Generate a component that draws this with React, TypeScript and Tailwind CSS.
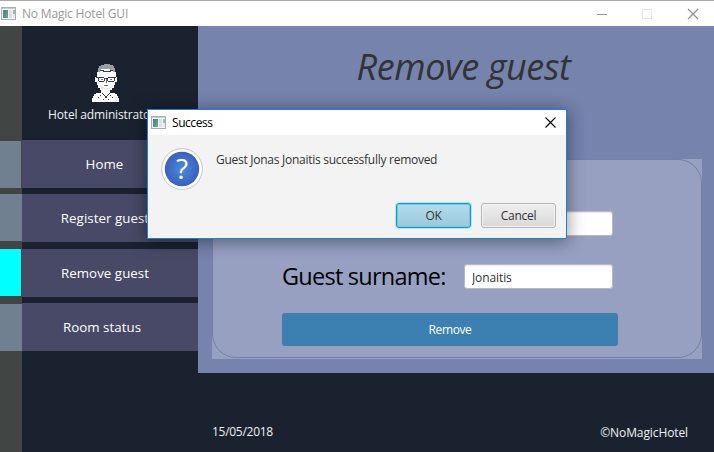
import React from "react";

const sans = "font-['Open_Sans','Noto_Sans',sans-serif]";

function AppIcon() {
  return (
    <svg width="16" height="14" viewBox="0 0 16 14" className="shrink-0" shapeRendering="crispEdges">
      <defs>
        <linearGradient id="pane" x1="0" y1="0" x2="1" y2="1">
          <stop offset="0" stopColor="#5576a0" />
          <stop offset="1" stopColor="#55b878" />
        </linearGradient>
      </defs>
      <rect x="0.5" y="0.5" width="14" height="12" fill="#f4f5f6" stroke="#a9b0b5" />
      <rect x="1" y="1" width="13" height="1" fill="#c9ced2" />
      <rect x="2" y="3" width="5" height="8" fill="url(#pane)" />
      <rect x="8" y="3" width="3" height="8" fill="#dfe2e4" />
      <rect x="12" y="3" width="2" height="4" fill="#8fc0b0" />
      <rect x="12" y="7" width="2" height="4" fill="#e6e8e9" />
    </svg>
  );
}

function Avatar() {
  return (
    <svg width="28" height="39" viewBox="0 0 28 39" shapeRendering="crispEdges">
      <path d="M4 14h1v-5h2v-3h15v3h2v5h1v5h-2v3h-1v3h-2v2h-2v3h5v1h2v2h1v2h1v4H0v-4h1v-2h1v-2h2v-1h5v-3H8v-2H6v-3H5v-3H3v-5z" fill="#fff" />
      <path d="M6 9V5h1V3h2V2h3V1h6v1h3v1h1v2h1v4h-2V7h-3V6h-9v1H8v2z" fill="#9b9da0" />
      <path d="M8 7h3v1h7V7h3" fill="none" stroke="#39404b" />
      <path d="M4 14.500h8M16 14.500h8M12 15.500h4M6.500 15v3M12.500 15v3M15.500 15v3M22.500 15v3M7 18.500h5M16 18.500h6" fill="none" stroke="#39404b" />
      <path d="M9 16h2v1H9zM18 16h2v1h-2zM14 16h1v4h-1zM12 22h4v1h-4z" fill="#6e737a" />
      <path d="M9 23h1v1h2v1h5v-1h2v-1h1v2h-2v1h-8v-1H9z" fill="#e5e8e8" />
      <path d="M10 30h1v1h1v1h1v1h2v-1h1v-1h1v-1h1v1h-1v1h-1v1h-1v2h-2v-2h-1v-1h-1v-1h-1zM6 34h1v1H6zM8 32h1v1H8zM11 36h1v1h-1zM16 36h1v1h-1zM20 34h1v1h-1zM18 32h1v1h-1z" fill="#39404b" />
    </svg>
  );
}

const nav = [
  { label: "Home", row: "h-12 items-end", mark: "h-[47px] w-[21px] bg-[#708090]", text: "pr-[11px]" },
  { label: "Register guest", row: "mt-1.5 h-12 items-start", mark: "h-[47px] w-[22px] bg-[#708090]", text: "pr-[10px]" },
  { label: "Remove guest", row: "mt-[7px] h-12 items-start", mark: "h-[47px] w-[21px] bg-[#00ffff]", text: "pr-[10px]" },
  { label: "Room status", row: "mt-1.5 h-12 items-end", mark: "h-[47px] w-[22px] bg-[#708090]", text: "pr-[16px]" },
];

function Sidebar() {
  return (
    <aside className="w-[198px] shrink-0 bg-[linear-gradient(to_right,#414544_22px,#1a2230_22px)]">
      <div className="flex h-[114px] flex-col pt-[37px]">
        <div className="pl-[92px]"><Avatar /></div>
        <p className="mt-[4px] pl-12 text-[12px] leading-[18px] tracking-[-0.15px] whitespace-nowrap text-[#f0f1f3]">Hotel administrator</p>
      </div>
      <nav>
        {nav.map((n) => (
          <div key={n.label} className={`flex ${n.row}`}>
            <div className="w-[22px]"><div className={n.mark} /></div>
            <div className={`flex h-12 flex-1 items-center justify-center bg-[#484966] pt-[2px] text-[13.3px] tracking-[0.05px] text-white ${n.text}`}>{n.label}</div>
          </div>
        ))}
      </nav>
    </aside>
  );
}

function Dialog() {
  return (
    <div className="absolute top-[109px] left-[147px] flex h-[130px] w-[420px] flex-col border border-[#1883d7] bg-[#f3f3f3] shadow-[0_2px_16px_1px_rgba(0,0,0,0.42)]">
      <div className="flex h-[25px] items-center bg-white pr-[10px] pl-[3px]">
        <AppIcon />
        <span className="ml-[5px] flex-1 text-[12px] tracking-[-0.45px] text-black">Success</span>
        <svg width="11" height="11" viewBox="0 0 11 11"><path d="M.5.5l10 10M10.500.5l-10 10" stroke="#000" strokeWidth="1.1" /></svg>
      </div>
      <div className="flex h-[67px] items-start pt-[13px] pl-[13px]">
        <svg width="42" height="42" viewBox="0 0 42 42">
          <defs>
            <radialGradient id="help"><stop offset="0" stopColor="#4a8bdd" /><stop offset="1" stopColor="#3960bd" /></radialGradient>
          </defs>
          <circle cx="21" cy="21" r="20.400" fill="#fff" stroke="#c6c6c6" />
          <circle cx="21" cy="21" r="17.200" fill="url(#help)" />
          <text x="21" y="31" textAnchor="middle" fontSize="28" fill="#fff" fontFamily="Open Sans">?</text>
        </svg>
        <p className="ml-[13px] pt-[3px] text-[12px] leading-[18px] tracking-[-0.27px] text-[#333]">Guest Jonas Jonaitis successfully removed</p>
      </div>
      <div className="flex justify-end gap-[10px] pr-[10px] text-[12px] text-[#333]">
        <button className="mt-[1px] h-[25px] w-[75px] rounded-[3px] border border-[#039ed3] bg-linear-to-b from-[#b3dcec] to-[#9bc8dc] pt-[1px] tracking-[-0.4px] shadow-[0_0_0_1px_#b5e3f1,inset_0_0_0_1px_#7ec6df]">OK</button>
        <button className="mt-[1px] h-[25px] w-[75px] rounded-[3px] border border-[#b5b5b5] bg-linear-to-b from-[#efefef] to-[#d9d9d9] pt-[1px] tracking-[-0.25px] shadow-[inset_0_0_0_1px_#f4f4f4]">Cancel</button>
      </div>
    </div>
  );
}

const input = "h-[25px] w-[149px] rounded-[3px] border border-[#b9bac0] bg-white px-[7px] pt-[1px] text-[12px] tracking-[-0.1px] text-[#333] shadow-[inset_0_1px_1px_#e8e8e8] outline-none";

export default function App() {
  return (
    <div className={`relative flex h-[452px] w-[714px] flex-col overflow-hidden bg-[#1a2230] ${sans}`}>
      <header className="flex h-[26px] shrink-0 items-center border-t border-[#a9a9a9] bg-white pl-[1px]">
        <AppIcon />
        <span className="ml-[5px] flex-1 text-[12px] tracking-[-0.18px] text-[#999]">No Magic Hotel GUI</span>
        <svg width="102" height="12" viewBox="0 0 102 12" className="mr-[15px]">
          <path d="M0 6.500h10" stroke="#999" />
          <rect x="45.500" y="1.500" width="9" height="9" fill="none" stroke="#e8e8e8" />
          <path d="M91 1l10 10M101 1l-10 10" stroke="#909090" strokeWidth="1.200" />
        </svg>
      </header>
      <div className="flex min-h-0 flex-1">
        <Sidebar />
        <div className="flex flex-1 flex-col">
          <main className="flex h-[347px] flex-col bg-[#7583ad] pr-3 pl-[14px]">
            <h1 className="h-[133px] pt-[17px] pl-[13px] text-center text-[36px] leading-[48px] tracking-[-0.4px] text-[#333] italic">Remove guest</h1>
            <section className="h-[200px] bg-[#97a0c1]">
              <div className="flex h-[199px] w-[490px] flex-col rounded-[24px] border border-[#7480a5] pl-[69px]">
                <div className="mt-[51px] flex h-[25px] items-center">
                  <label className="w-[182px] text-[24px] tracking-[-0.95px] text-black">Guest name:</label>
                  <input className={input} defaultValue="" />
                </div>
                <div className="mt-7 flex h-[25px] items-center">
                  <label className="w-[182px] text-[23.5px] tracking-[-0.75px] whitespace-nowrap text-black">Guest surname:</label>
                  <input className={input} defaultValue="Jonaitis" />
                </div>
                <button className="mt-6 h-[33px] w-[336px] rounded-[3px] bg-[#3c7fb1] pt-[1px] text-[12px] tracking-[-0.4px] text-white">Remove</button>
              </div>
            </section>
          </main>
          <footer className="flex flex-1 justify-between pt-[50px] pr-[26px] pl-[14px] text-[12px] leading-[18px] text-[#f0f1f3]">
            <span className="tracking-[-0.28px]">15/05/2018</span>
            <span className="pt-[1px] tracking-[-0.1px]">©NoMagicHotel</span>
          </footer>
        </div>
      </div>
      <Dialog />
    </div>
  );
}
